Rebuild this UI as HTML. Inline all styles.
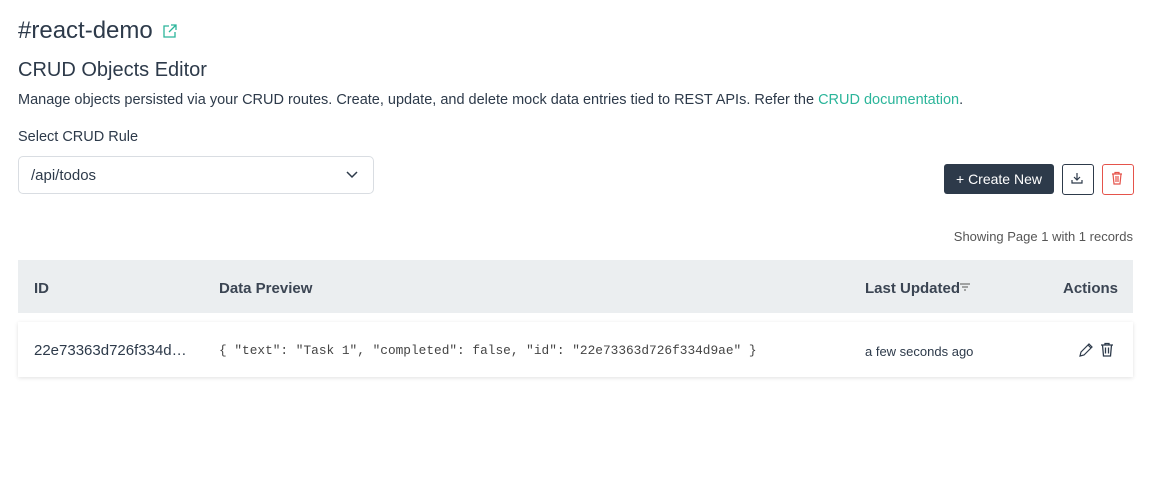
<!DOCTYPE html>
<html><head><style>
body{margin:0;background:#fff;font-family:"Liberation Sans",sans-serif;color:#2d3a4a;width:1158px;height:502px;overflow:hidden;position:relative}
.a{position:absolute;white-space:nowrap}
</style></head><body>
<div class="a" style="left:18px;top:17px;font-size:24px;color:#2d3a4a">#react-demo</div>
<svg class="a" style="left:162px;top:23px" width="16" height="16" viewBox="0 0 16 16" fill="none" stroke="#2bb59a" stroke-width="1.3"><path d="M7 3H2v11h11V9"/><path d="M9 2h5v5M14 2L7 9"/></svg>
<div class="a" style="left:18px;top:59px;font-size:20px">CRUD Objects Editor</div>
<div class="a" style="left:18px;top:92px;font-size:14.5px;color:#2d3a4a">Manage objects persisted via your CRUD routes. Create, update, and delete mock data entries tied to REST APIs. Refer the <span style="color:#2bb59a">CRUD documentation</span>.</div>
<div class="a" style="left:18px;top:129px;font-size:14.5px">Select CRUD Rule</div>
<div class="a" style="left:18px;top:156px;width:354px;height:36px;border:1px solid #d9dde2;border-radius:5px"></div>
<div class="a" style="left:31px;top:167px;font-size:15px">/api/todos</div>
<svg class="a" style="left:346px;top:171px" width="12" height="8" viewBox="0 0 12 8" fill="none" stroke="#2d3a4a" stroke-width="1.5"><path d="M1 1l5 5 5-5"/></svg>
<div class="a" style="left:944px;top:164px;width:110px;height:30px;background:#2d3a4a;border-radius:3px;color:#fff;font-size:14px;line-height:30px;text-align:center">+ Create New</div>
<div class="a" style="left:1062px;top:164px;width:30px;height:29px;border:1px solid #2d3a4a;border-radius:3px"></div>
<svg class="a" style="left:1070px;top:171px" width="14" height="14" viewBox="0 0 14 14" fill="none" stroke="#2d3a4a" stroke-width="1.2"><path d="M7 2v7M4 6l3 3 3-3M2 9v3h10V9"/></svg>
<div class="a" style="left:1102px;top:164px;width:30px;height:29px;border:1px solid #e5534b;border-radius:3px"></div>
<svg class="a" style="left:1110px;top:171px" width="14" height="14" viewBox="0 0 14 14" fill="none" stroke="#e5534b" stroke-width="1.2"><path d="M2 3h10M5 3V1.5h4V3M3 3l1 10h6l1-10M6 5v6M8 5v6"/></svg>
<div class="a" style="right:25px;top:229px;font-size:13px;color:#555">Showing Page 1 with 1 records</div>
<div class="a" style="left:18px;top:260px;width:1115px;height:53px;background:#ebeef0"></div>
<div class="a" style="left:34px;top:280px;font-size:15px;font-weight:bold;color:#3b4553">ID</div>
<div class="a" style="left:219px;top:280px;font-size:15px;font-weight:bold;color:#3b4553">Data Preview</div>
<div class="a" style="left:865px;top:280px;font-size:15px;font-weight:bold;color:#3b4553">Last Updated</div>
<svg class="a" style="left:959px;top:283px" width="12" height="8" viewBox="0 0 12 8" stroke="#555" stroke-width="1"><path d="M1 1h10M3 4h6M5 7h2"/></svg>
<div class="a" style="right:40px;top:280px;font-size:15px;font-weight:bold;color:#3b4553">Actions</div>
<div class="a" style="left:18px;top:322px;width:1115px;height:55px;background:#fff;box-shadow:0 1px 4px rgba(0,0,0,.12)"></div>
<div class="a" style="left:34px;top:342px;font-size:15px">22e73363d726f334d…</div>
<div class="a" style="left:219px;top:343px;font-size:12.8px;font-family:'Liberation Mono',monospace;color:#444">{ "text": "Task 1", "completed": false, "id": "22e73363d726f334d9ae" }</div>
<div class="a" style="left:865px;top:344px;font-size:13px">a few seconds ago</div>
<svg class="a" style="left:1078px;top:342px" width="16" height="16" viewBox="0 0 16 16" fill="none" stroke="#2d3a4a" stroke-width="1.2"><path d="M2 14l1-4 8-8 3 3-8 8zM10 3l3 3"/></svg>
<svg class="a" style="left:1100px;top:342px" width="14" height="15" viewBox="0 0 14 15" fill="none" stroke="#2d3a4a" stroke-width="1.3"><path d="M1 3h12M5 3V1.5h4V3M2.5 3l1 11h7l1-11M5.5 5.5v6M8.5 5.5v6"/></svg>
</body></html>
